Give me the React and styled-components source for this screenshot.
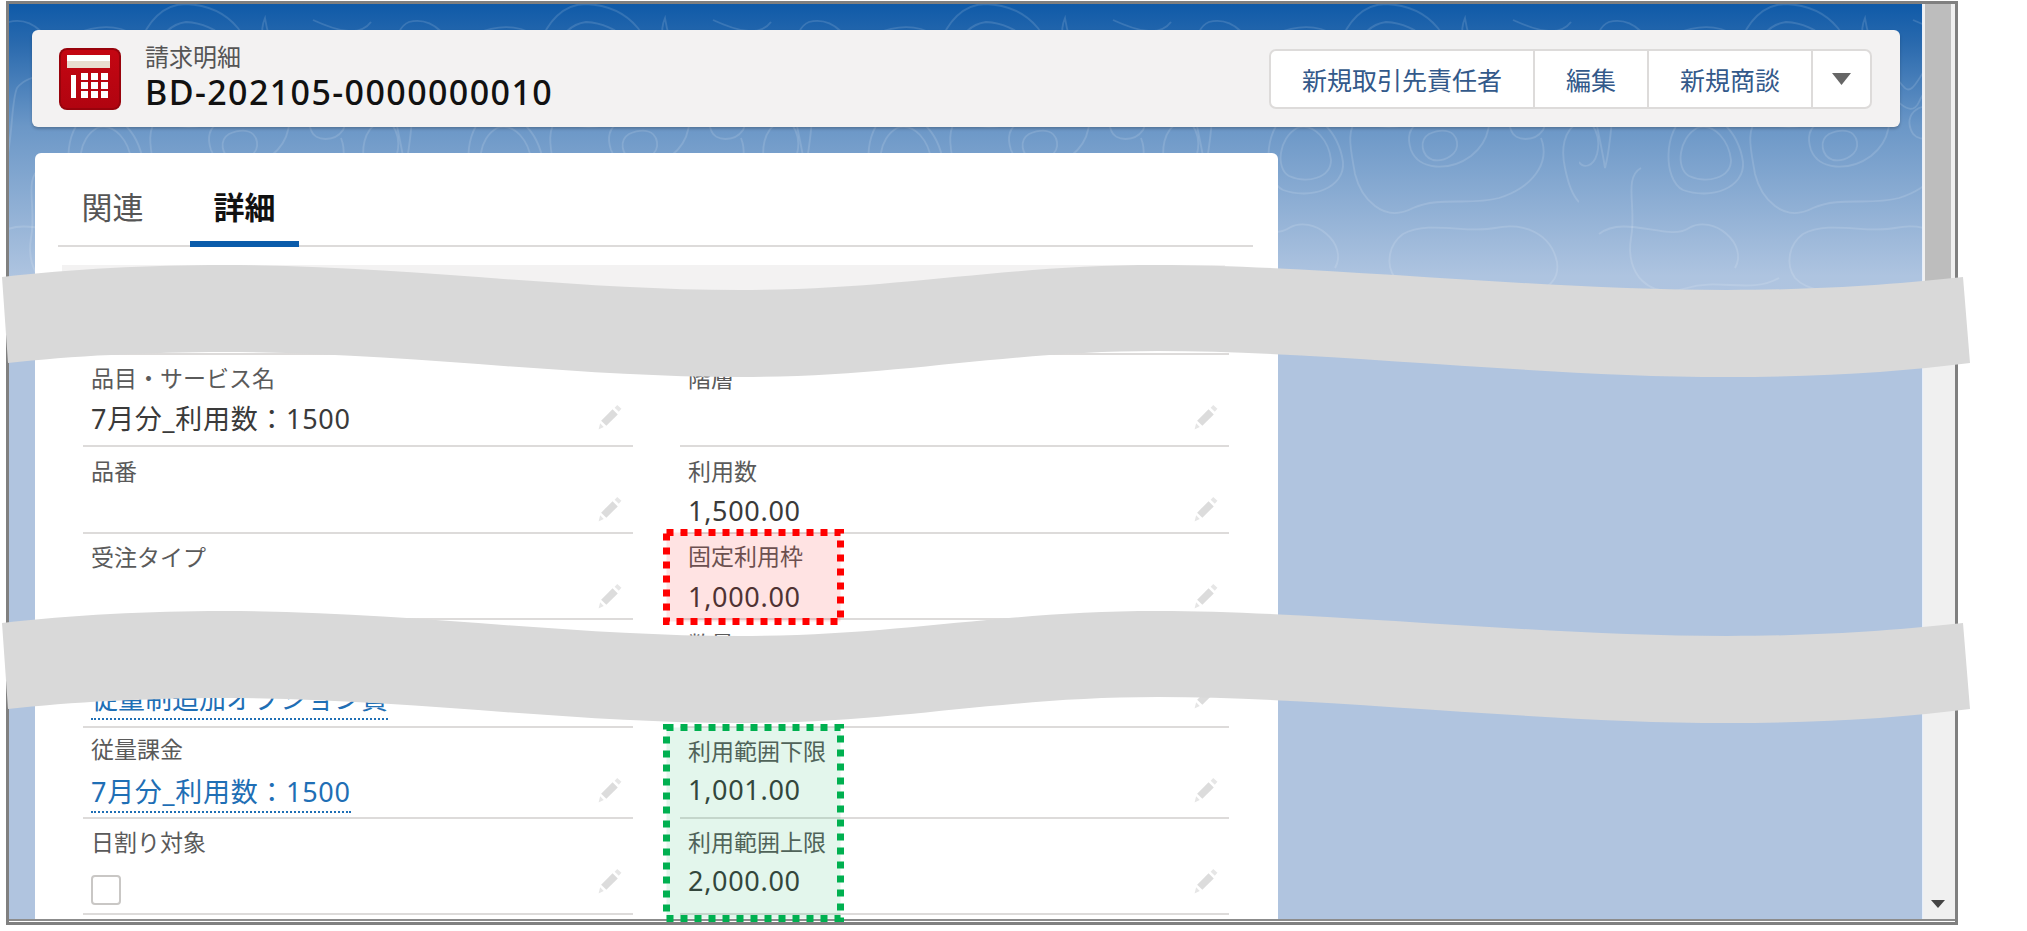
import React from "react";
import styled, { createGlobalStyle } from "styled-components";

const GlobalStyle = createGlobalStyle`
  html, body {
    margin: 0;
    padding: 0;
    background: #fff;
    overflow: hidden;
  }
  * {
    box-sizing: border-box;
  }
`;

const FONT = `"Noto Sans", "Noto Sans CJK JP", sans-serif`;

const rows = [
  { left: {}, right: {} },
  {
    left: { label: "品目・サービス名", value: "7月分_利用数：1500", pad: 10, gap: 12, pencil: true },
    right: { label: "階層", pad: 10, pencil: true },
  },
  {
    left: { label: "品番", pad: 11, pencil: true },
    right: { label: "利用数", value: "1,500.00", pad: 11, pencil: true },
  },
  {
    left: { label: "受注タイプ", pad: 10, pencil: true },
    right: { label: "固定利用枠", value: "1,000.00", pad: 9, gap: 12, pencil: true },
  },
  {
    left: { value: "従量制追加オプション費", link: true, tight: true, pad: 63 },
    right: { label: "数量", pad: 11, pencil: true, pencilTop: 63 },
  },
  {
    left: { label: "従量課金", value: "7月分_利用数：1500", link: true, pad: 8, gap: 14, pencil: true },
    right: { label: "利用範囲下限", value: "1,001.00", pad: 10, gap: 10, pencil: true },
  },
  {
    left: { label: "日割り対象", check: true, pad: 10, gap: 10, pencil: true },
    right: { label: "利用範囲上限", value: "2,000.00", pad: 10, gap: 10, pencil: true },
  },
];

const TOPO_LINES = [
  "M207 34 C240 36 262 60 258 88 C254 114 226 128 198 122 C172 116 166 88 176 64 C182 46 192 36 207 34 Z",
  "M207 16 C252 18 278 52 272 92 C266 128 226 146 188 136 C158 128 148 90 160 58 C168 34 184 16 207 16 Z",
  "M100 62 C128 50 150 54 158 66 C166 80 152 92 136 96 C118 102 104 114 94 102 C88 90 90 70 100 62 Z",
  "M96 46 C130 32 160 40 168 66 C174 88 150 106 124 112 C104 118 88 130 84 104 C80 80 78 54 96 46 Z",
  "M30 34 C54 28 74 50 78 76 C80 92 52 82 38 100 C32 114 34 150 26 180 C20 140 6 100 14 66 C16 50 20 38 30 34 Z",
  "M108 126 C136 116 160 146 164 174 C166 200 132 212 104 202 C84 192 84 142 108 126 Z",
  "M118 140 C136 134 150 154 152 172 C152 190 128 196 110 188 C96 180 100 150 118 140 Z",
  "M240 134 C262 126 286 106 300 114 C318 126 310 154 292 168 C270 184 240 182 232 162 C228 150 230 140 240 134 Z",
  "M250 146 C264 140 276 142 278 154 C280 166 266 174 254 172 C242 168 240 152 250 146 Z",
  "M286 30 C290 60 306 78 324 98 C336 114 344 70 360 72 C366 84 348 96 340 114 C330 136 306 100 294 76 C284 60 280 44 286 30 Z",
  "M180 128 C166 142 172 162 176 186 C182 210 204 236 234 220 C262 208 290 218 320 210 C352 200 372 176 362 150",
  "M334 32 C356 42 380 50 392 34",
  "M340 120 C362 112 372 128 364 142 C356 154 336 154 332 142 C328 132 332 124 340 120 Z",
  "M0 134 C16 130 22 150 18 166 C14 180 4 180 0 174",
  "M400 134 C384 142 382 162 386 180 C390 200 396 210 400 214",
  "M62 180 C44 190 58 220 52 250 C46 286 70 312 108 300 C140 290 172 306 200 290",
  "M224 246 C250 232 288 246 316 240 C346 234 372 246 378 274 C382 300 352 312 320 306 C284 300 236 312 216 290 C206 276 210 256 224 246 Z",
  "M20 246 C46 226 90 254 110 240 C134 226 170 256 156 280",
  "M40 4 C70 -4 110 10 140 4 C170 -2 200 12 230 6",
  "M260 4 C290 -2 320 14 350 6",
];

function Pencil({ top }) {
  return (
    <PencilIcon $top={top} viewBox="0 0 24 25" aria-hidden="true">
      <path d="M3 16 L14 5 L19 10 L8 21 Z" fill="#dcdcdc" />
      <path d="M16 3.5 L18.5 1 L22.5 4.5 L20 7.5 Z" fill="#e6e6e6" />
      <path d="M2 18.5 L5.5 22 L0.5 24.5 Z" fill="#e6e6e6" />
    </PencilIcon>
  );
}

function Field({ label, value, link, tight, check, pad = 0, gap = 11, pencil, pencilTop = 49 }) {
  return (
    <FieldBox $pad={pad}>
      {label && <FieldLabel $gap={gap}>{label}</FieldLabel>}
      {value && !link && <FieldValue>{value}</FieldValue>}
      {value && link && <FieldLink $tight={tight}>{value}</FieldLink>}
      {check && <CheckBox />}
      {pencil && <Pencil top={pencilTop} />}
    </FieldBox>
  );
}

function DottedBox({ color, fill, top, height }) {
  return (
    <Highlight $top={top} $height={height} viewBox={`0 0 181 ${height}`} aria-hidden="true">
      <rect
        x="3.5"
        y="3.5"
        width="174"
        height={height - 7}
        fill={fill}
        stroke={color}
        strokeWidth="7"
        strokeDasharray="7 7"
      />
    </Highlight>
  );
}

export default function App() {
  return (
    <Shot>
      <GlobalStyle />
      <Frame>
        <Viewport>
          <Page>
            <Topo aria-hidden="true">
              <defs>
                <pattern id="topo" width="400" height="400" patternUnits="userSpaceOnUse" patternTransform="translate(-30 -16)">
                  {TOPO_LINES.map((d) => (
                    <path key={d} d={d} fill="none" stroke="#fff" strokeOpacity="0.13" strokeWidth="1.8" />
                  ))}
                </pattern>
              </defs>
              <rect width="100%" height="100%" fill="url(#topo)" />
            </Topo>
            <Header>
              <RecordIcon viewBox="0 0 62 62" aria-hidden="true">
                <defs>
                  <linearGradient id="red" x1="0" y1="0" x2="0" y2="1">
                    <stop offset="0" stopColor="#c40612" />
                    <stop offset="1" stopColor="#b10410" />
                  </linearGradient>
                </defs>
                <rect width="62" height="62" rx="8" fill="#98030c" />
                <rect x="2" y="2" width="58" height="58" rx="6" fill="url(#red)" />
                <rect x="8" y="7" width="43" height="6" fill="#fff" />
                <rect x="8" y="13" width="43" height="7" fill="#e9dcd0" />
                <rect x="12" y="27" width="5" height="23" fill="#fff" />
                {[25, 34, 43].map((y) =>
                  [22, 32, 42].map((x) => (
                    <rect key={`${x}-${y}`} x={x} y={y} width="7" height="7" fill="#fff" />
                  ))
                )}
              </RecordIcon>
              <TitleBlock>
                <ObjectName>請求明細</ObjectName>
                <RecordName>BD-202105-0000000010</RecordName>
              </TitleBlock>
              <ButtonGroup>
                <ActionButton $width={262}>新規取引先責任者</ActionButton>
                <ActionButton $width={114}>編集</ActionButton>
                <ActionButton $width={164}>新規商談</ActionButton>
                <ActionButton $width={59}>
                  <svg width="19" height="12" viewBox="0 0 19 12" aria-hidden="true">
                    <path d="M0 0 H19 L9.5 12 Z" fill="#666" />
                  </svg>
                </ActionButton>
              </ButtonGroup>
            </Header>
            <Card>
              <TabBar>
                <Tab>関連</Tab>
                <Tab $active>詳細</Tab>
              </TabBar>
              <SectionBand />
              <FormGrid>
                {rows.map((row, i) => (
                  <React.Fragment key={i}>
                    <Field {...row.left} />
                    <Field {...row.right} />
                  </React.Fragment>
                ))}
              </FormGrid>
            </Card>
          </Page>
          <Scrollbar>
            <Thumb />
            <ScrollArrow viewBox="0 0 14 8" aria-hidden="true">
              <path d="M0 0 H14 L7 8 Z" fill="#444" />
            </ScrollArrow>
          </Scrollbar>
        </Viewport>
      </Frame>
      <DottedBox color="#ff0000" fill="rgba(255, 0, 0, 0.11)" top={529} height={96} />
      <DottedBox color="#00b050" fill="rgba(0, 176, 80, 0.11)" top={724} height={198} />
      <Waves viewBox="0 0 2027 931" aria-hidden="true">
        <path id="wave" d="M2 277 C70 269 150 265 223 265 C400 265 570 290 740 290 C900 290 1000 265 1158 265 C1320 265 1540 290 1727 290 C1820 290 1900 284 1963 277 L1970 363 C1900 372 1820 377 1727 377 C1540 377 1330 351 1158 351 C1000 351 900 377 740 377 C570 377 400 352 223 352 C150 352 70 356 8 363 Z" fill="#d9d9d9" />
        <use href="#wave" y="346" />
      </Waves>
    </Shot>
  );
}

const Shot = styled.div`
  position: relative;
  width: 2027px;
  height: 931px;
  overflow: hidden;
  padding: 1px 0 0 6px;
  font-family: ${FONT};
`;

const Frame = styled.div`
  width: 1952px;
  height: 924px;
  border: 3px solid #808080;
  padding-bottom: 1px;
  background: #fff;
`;

const Viewport = styled.div`
  display: flex;
  height: 100%;
  border-bottom: 2px solid #8c8c8c;
`;

const Page = styled.div`
  position: relative;
  flex: 1;
  min-width: 0;
  display: flex;
  flex-direction: column;
  padding: 26px 22px 0 23px;
  gap: 26px;
  overflow: hidden;
  background: linear-gradient(
    180deg,
    #0f5aa8 0,
    #2a6aae 40px,
    #6b97c7 122px,
    #aec4e0 272px,
    #b0c4df 300px
  );
`;

const Topo = styled.svg`
  position: absolute;
  top: 0;
  left: 0;
  width: 100%;
  height: 380px;
`;

const Header = styled.header`
  position: relative;
  display: flex;
  align-items: center;
  flex: none;
  width: 1868px;
  height: 97px;
  padding: 0 28px 0 27px;
  background: #f3f2f2;
  border-radius: 6px;
  box-shadow: 0 2px 3px rgba(0, 0, 0, 0.22);
`;

const RecordIcon = styled.svg`
  flex: none;
  width: 62px;
  height: 62px;
`;

const TitleBlock = styled.div`
  display: flex;
  flex-direction: column;
  gap: 3px;
  margin: 0 0 2px 24px;
`;

const ObjectName = styled.div`
  font-size: 24px;
  line-height: 26px;
  color: #555;
`;

const RecordName = styled.h1`
  margin: 0;
  font-size: 34px;
  line-height: 38px;
  font-weight: 500;
  letter-spacing: 1.4px;
  color: #111;
  white-space: nowrap;
`;

const ButtonGroup = styled.div`
  display: flex;
  margin-left: auto;
  height: 60px;
  background: #fff;
  border: 2px solid #dddbda;
  border-radius: 7px;
`;

const ActionButton = styled.div`
  display: flex;
  align-items: center;
  justify-content: center;
  width: ${(p) => p.$width}px;
  font-size: 25px;
  color: #33598a;
  white-space: nowrap;
  & + & {
    border-left: 2px solid #dddbda;
  }
`;

const Card = styled.main`
  position: relative;
  flex: 1;
  width: 1243px;
  margin-left: 3px;
  background: #fff;
  border-radius: 6px 6px 0 0;
`;

const TabBar = styled.nav`
  display: flex;
  gap: 23px;
  height: 94px;
  margin: 0 25px 0 23px;
  border-bottom: 2px solid #dddbda;
`;

const Tab = styled.div`
  width: 109px;
  height: 94px;
  padding-top: 33px;
  text-align: center;
  font-size: 31px;
  line-height: 42px;
  font-weight: ${(p) => (p.$active ? 700 : 400)};
  color: ${(p) => (p.$active ? "#111" : "#555")};
  border-bottom: 6px solid ${(p) => (p.$active ? "#0b5cab" : "transparent")};
`;

const SectionBand = styled.div`
  height: 45px;
  margin: 18px 53px 0 27px;
  background: #f3f2f2;
`;

const FormGrid = styled.section`
  display: grid;
  grid-template-columns: 550px 549px;
  grid-template-rows: 45px 92px 87px 86px 108px 91px 96px;
  column-gap: 47px;
  margin-left: 48px;
`;

const FieldBox = styled.div`
  position: relative;
  padding: ${(p) => p.$pad}px 0 0 8px;
  border-bottom: 2px solid #dddbda;
`;

const FieldLabel = styled.div`
  font-size: 23px;
  line-height: 26px;
  margin-bottom: ${(p) => p.$gap}px;
  color: #5a5a5a;
  white-space: nowrap;
`;

const FieldValue = styled.div`
  font-size: 27px;
  line-height: 32px;
  letter-spacing: 0.7px;
  color: #3a3a3a;
  white-space: nowrap;
`;

const FieldLink = styled(FieldValue)`
  width: fit-content;
  padding-bottom: 3px;
  letter-spacing: ${(p) => (p.$tight ? 0 : 0.7)}px;
  color: #1f6fb5;
  border-bottom: 2px dotted #1f6fb5;
`;

const CheckBox = styled.div`
  width: 30px;
  height: 30px;
  margin-top: 20px;
  background: #fff;
  border: 2px solid #c9c7c5;
  border-radius: 4px;
`;

const PencilIcon = styled.svg`
  position: absolute;
  top: ${(p) => p.$top}px;
  right: 10px;
  width: 25px;
  height: 26px;
`;

const Scrollbar = styled.aside`
  display: flex;
  flex-direction: column;
  justify-content: space-between;
  flex: none;
  width: 33px;
  padding: 0 4px 11px 2px;
  background: #f0f0f0;
  border-left: 1px solid #e6eefa;
`;

const Thumb = styled.div`
  width: 100%;
  height: 330px;
  background: #bdbdbd;
`;

const ScrollArrow = styled.svg`
  align-self: center;
  width: 14px;
  height: 8px;
`;

const Highlight = styled.svg`
  position: absolute;
  left: 663px;
  top: ${(p) => p.$top}px;
  width: 181px;
  height: ${(p) => p.$height}px;
`;

const Waves = styled.svg`
  position: absolute;
  top: 0;
  left: 0;
  width: 2027px;
  height: 931px;
  pointer-events: none;
`;
